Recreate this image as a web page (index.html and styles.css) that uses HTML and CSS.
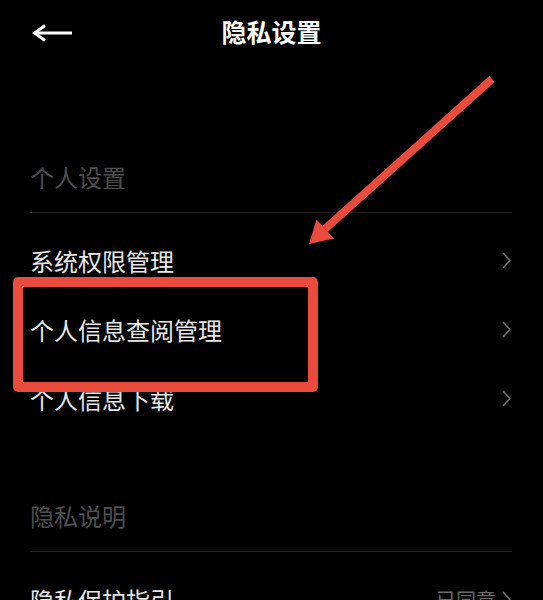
FILE: index.html
```html
<!DOCTYPE html>
<html lang="zh-CN">
<head>
<meta charset="utf-8">
<title>隐私设置</title>
<link rel="stylesheet" href="styles.css">
</head>
<body>
<div class="page">
  <header class="topbar">
    <span class="back">
      <svg width="40" height="18" viewBox="0 0 40 18"><path d="M2 9H40" stroke="#fff" stroke-width="3" fill="none"/><path d="M13 1.5L2.5 9L13 16.5" stroke="#fff" stroke-width="3" fill="none" stroke-linejoin="miter"/></svg>
    </span>
    <h1 class="title">隐私设置</h1>
    <span></span>
  </header>

  <section class="group">
    <div class="group-title">个人设置</div>
    <ul class="list">
      <li class="row"><span class="label">系统权限管理</span><svg class="chev" width="9" height="17" viewBox="0 0 9 17"><path d="M1 1L8 8.5L1 16" stroke="#707070" stroke-width="1.6" fill="none"/></svg></li>
      <li class="row"><span class="label">个人信息查阅管理</span><svg class="chev" width="9" height="17" viewBox="0 0 9 17"><path d="M1 1L8 8.5L1 16" stroke="#707070" stroke-width="1.6" fill="none"/></svg></li>
      <li class="row"><span class="label">个人信息下载</span><svg class="chev" width="9" height="17" viewBox="0 0 9 17"><path d="M1 1L8 8.5L1 16" stroke="#707070" stroke-width="1.6" fill="none"/></svg></li>
    </ul>
  </section>

  <section class="group">
    <div class="group-title">隐私说明</div>
    <ul class="list">
      <li class="row"><span class="label">隐私保护指引</span><span class="right"><span class="value">已同意</span><svg class="chev" width="9" height="17" viewBox="0 0 9 17"><path d="M1 1L8 8.5L1 16" stroke="#707070" stroke-width="1.6" fill="none"/></svg></span></li>
    </ul>
  </section>

  <div class="annot-box"></div>
  <svg class="annot-arrow" width="543" height="600" viewBox="0 0 543 600">
    <path d="M492 79L325 229" stroke="#e94b3c" stroke-width="8" fill="none" stroke-linecap="butt"/>
    <polygon points="309,244 316.5,219.5 334,238.5" fill="#e94b3c"/>
  </svg>
</div>
</body>
</html>
```

FILE: styles.css
```css
html, body {
  margin: 0;
  padding: 0;
  background: #000;
}
body {
  font-family: "Noto Sans CJK SC", "Noto Sans", sans-serif;
  color: #e6e6e6;
}
.page {
  position: relative;
  width: 543px;
  height: 600px;
  overflow: hidden;
  background: #000;
}
.topbar {
  height: 62px;
  display: grid;
  grid-template-columns: 1fr auto 1fr;
  align-items: center;
  padding-left: 32px;
  margin-bottom: 34px;
}
.back {
  display: flex;
  align-items: center;
  height: 18px;
  margin-top: 4px;
}
.title {
  margin: 0;
  font-size: 25px;
  font-weight: 700;
  color: #fff;
  line-height: 30px;
  margin-left: -32px;
}
.group {
  margin: 0 31px 0 30px;
}
.group-title {
  padding-top: 68px;
  padding-bottom: 22px;
  line-height: 26px;
  font-size: 24px;
  color: #4e4e4e;
  border-bottom: 1px solid #242424;
}
.list {
  list-style: none;
  margin: 0;
  padding: 13px 0 0;
}
.row {
  height: 69px;
  display: flex;
  align-items: center;
  justify-content: space-between;
  font-size: 24px;
  line-height: 30px;
}
.group + .group .group-title {
  padding-top: 70px;
}
.label {
  color: #e8e8e8;
}
.chev {
  display: block;
  margin-right: 1px;
}
.right {
  display: flex;
  align-items: center;
  gap: 6px;
}
.value {
  font-size: 20px;
  color: #6a6a6a;
}
.annot-box {
  position: absolute;
  left: 13px;
  top: 277px;
  width: 285px;
  height: 95px;
  border: 10px solid #e94b3c;
  border-radius: 5px;
}
.annot-arrow {
  position: absolute;
  left: 0;
  top: 0;
  pointer-events: none;
}
```
